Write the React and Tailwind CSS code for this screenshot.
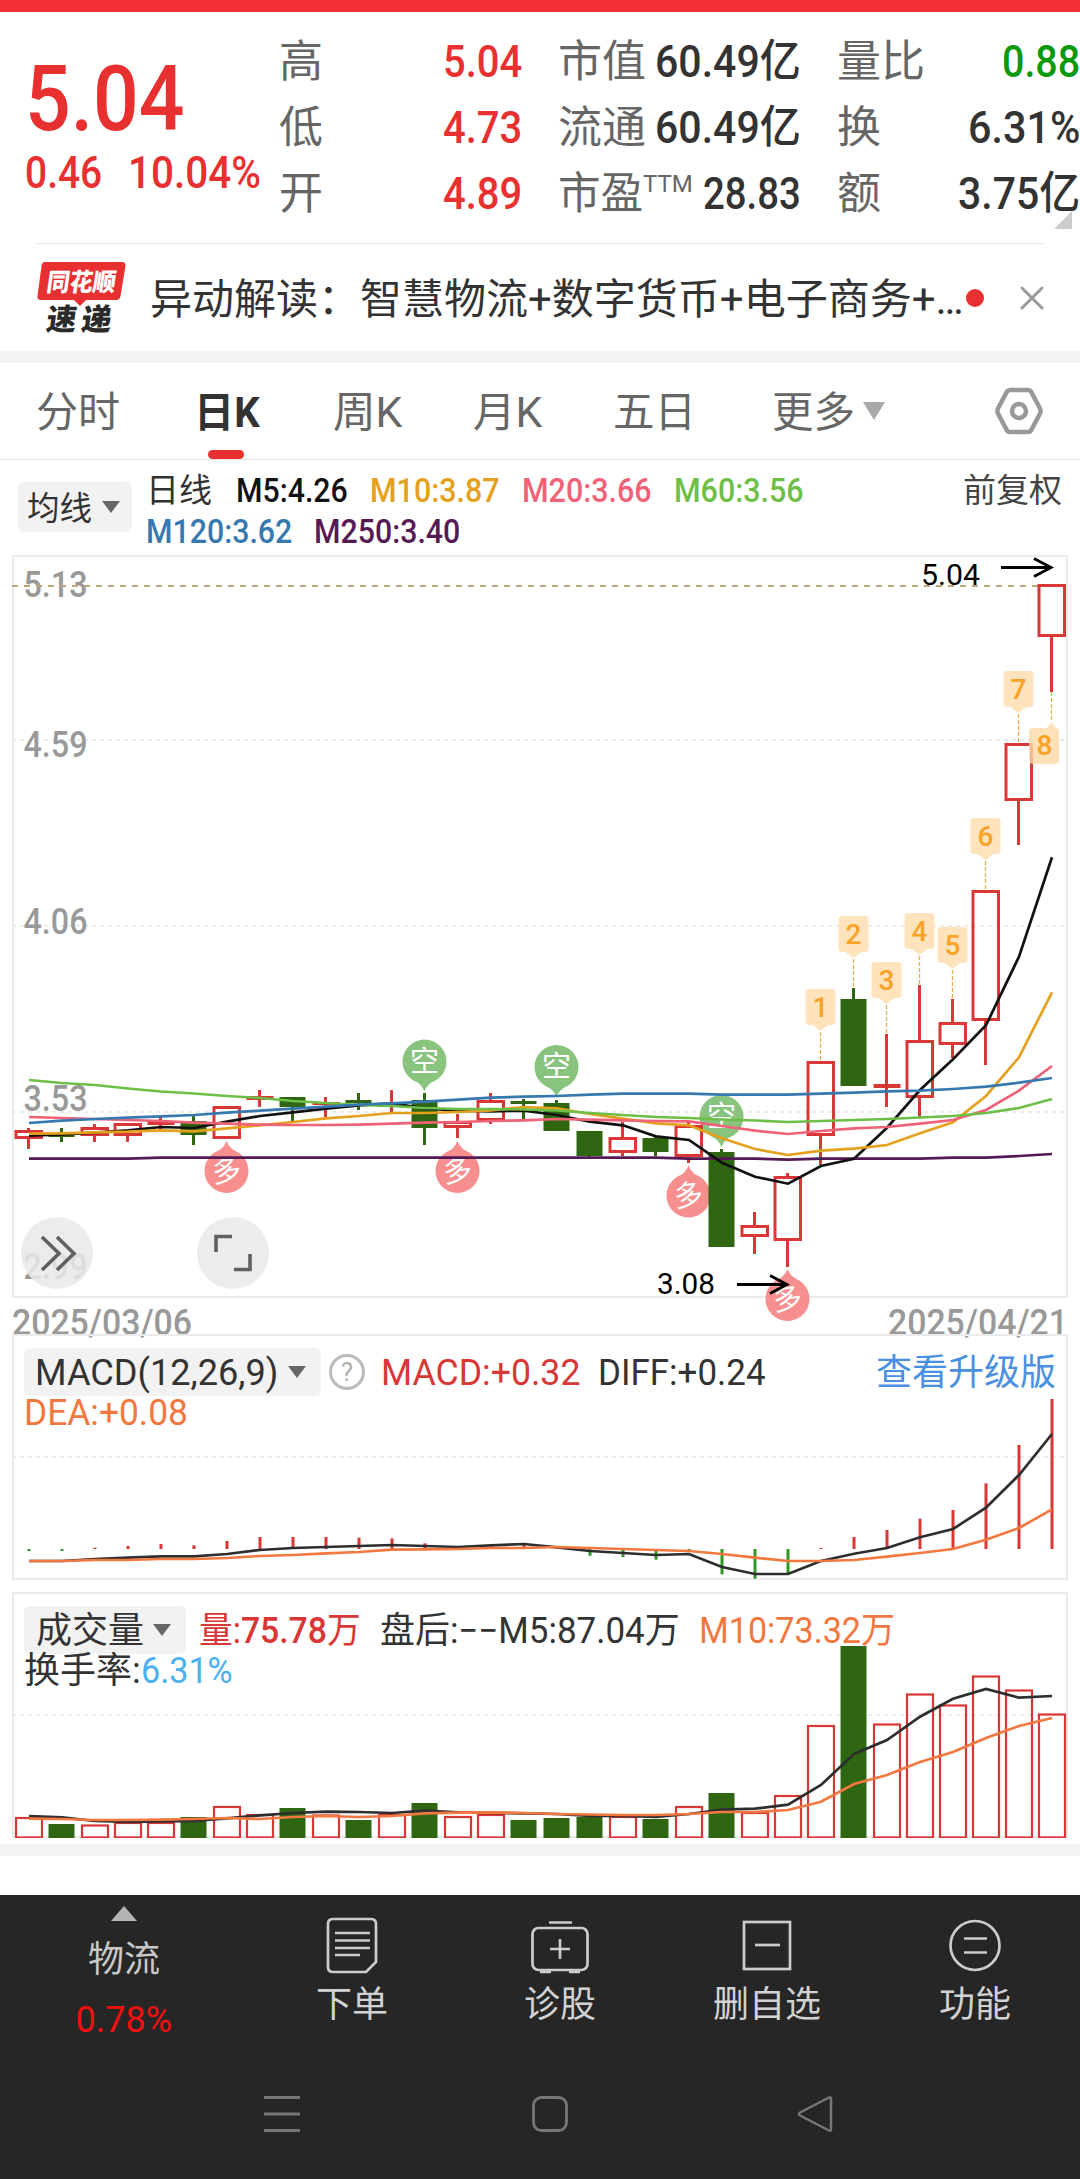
import { useLayoutEffect, useRef } from "react"
import { X } from "lucide-react"

const RED = "#d93636"
const GREEN = "#2f6612"
const px = (i) => 28.5 + i * 33

// [color, body top, body bottom, high, low]
const candles = [
  ["r", 1130, 1139, 1128, 1149], ["g", 1134, 1137, 1128, 1142], ["r", 1127, 1136, 1124, 1142], ["r", 1123, 1136, 1123, 1142],
  ["r", 1121, 1125, 1115, 1129], ["g", 1121, 1135, 1116, 1145], ["r", 1106, 1139, 1106, 1139], ["r", 1096, 1100, 1090, 1107],
  ["g", 1097, 1107, 1097, 1121], ["r", 1102, 1105, 1097, 1117], ["g", 1100, 1103, 1093, 1110], ["r", 1104, 1107, 1090, 1112],
  ["g", 1100, 1128, 1093, 1145], ["r", 1121, 1128, 1114, 1138], ["r", 1100, 1121, 1093, 1124], ["g", 1101, 1104, 1099, 1119],
  ["g", 1103, 1131, 1100, 1131], ["g", 1131, 1156, 1131, 1157], ["r", 1137, 1153, 1122, 1156], ["g", 1138, 1152, 1137, 1156],
  ["r", 1125, 1157, 1120, 1163], ["g", 1152, 1247, 1149, 1247], ["r", 1225, 1237, 1212, 1254], ["r", 1176, 1241, 1173, 1267],
  ["r", 1061, 1136, 1061, 1165], ["g", 999, 1086, 988, 1086], ["r", 1084, 1088, 1034, 1107], ["r", 1040, 1098, 985, 1117],
  ["r", 1022, 1045, 999, 1058], ["r", 890, 1021, 890, 1065], ["r", 743, 801, 743, 845], ["r", 584, 637, 584, 692],
]

const averages = [
  ["#551a55", [1158.7, 1158.7, 1158.7, 1158.7, 1157.7, 1157.7, 1157.7, 1157.7, 1157.7, 1157.7, 1157.7, 1157.7, 1157.7, 1157.7, 1157.7, 1157.7, 1157.7, 1157.7, 1157.7, 1157.7, 1158.7, 1158.7, 1158.7, 1159.7, 1158.7, 1158.7, 1158.7, 1158.7, 1157.7, 1157.7, 1156, 1154]],
  ["#111111", [1135.7, 1134.3, 1132.7, 1130.3, 1127, 1128, 1121.7, 1116, 1112.3, 1108.7, 1105.3, 1103.3, 1108.3, 1110.7, 1111.3, 1110.7, 1115, 1121.7, 1125.3, 1136.3, 1140, 1162.7, 1176.7, 1183.7, 1166, 1158.7, 1127.7, 1090, 1059.3, 1025.3, 956.7, 857.3]],
  ["#e5a01e", [1133.7, 1133.3, 1132.3, 1131.7, 1130.3, 1131.3, 1128.3, 1125.3, 1122, 1118.3, 1116, 1113, 1113, 1112, 1110.3, 1107, 1108.3, 1114, 1118.7, 1123.3, 1125.3, 1138.3, 1149, 1155, 1150.7, 1148.7, 1145, 1133.3, 1122.3, 1096, 1057.3, 992.3]],
  ["#f06277", [1117, 1118, 1119, 1120, 1121, 1122.7, 1123.7, 1124.7, 1125, 1125, 1124.7, 1123.7, 1122.7, 1122, 1121, 1120.3, 1119, 1119.7, 1120.3, 1121, 1121.3, 1126, 1130.7, 1134, 1131, 1128.3, 1127, 1123.7, 1120, 1110, 1090.7, 1066]],
  ["#6dbf47", [1080, 1083, 1085, 1088.5, 1091.5, 1093.5, 1096, 1098, 1101, 1103, 1105, 1106, 1108, 1109, 1109, 1109.5, 1110.5, 1113, 1115, 1117, 1118, 1119.5, 1120.5, 1122, 1121, 1120, 1119, 1117.5, 1116, 1113, 1108, 1099]],
  ["#3579b0", [1123, 1120.7, 1119, 1117.7, 1116.3, 1115, 1112.7, 1110.7, 1108.7, 1106.7, 1104.7, 1103.3, 1101.7, 1099.7, 1097.7, 1096.7, 1096, 1094.7, 1093.7, 1093.7, 1093.7, 1094.7, 1094.7, 1094.7, 1093.7, 1092.7, 1091.3, 1090.7, 1089, 1086.7, 1082.7, 1078]],
]

const macdBars = [1551, 1551, 1547.7, 1546, 1544, 1545.3, 1541, 1537, 1537, 1537, 1537.7, 1538.3, 1543.3, 1547, 1546, 1545, 1548, 1555.7, 1557, 1559.7, 1551.7, 1574.3, 1578.7, 1573, 1548, 1537, 1530, 1518.7, 1510, 1483.3, 1445, 1399]
const diff = [1561, 1561, 1559, 1557.7, 1556.3, 1556.3, 1554, 1550, 1548, 1547, 1546, 1545, 1546, 1547, 1545.3, 1544, 1547.3, 1551, 1553, 1555, 1554, 1567, 1574, 1574, 1561, 1553.7, 1548, 1537.3, 1529, 1507.7, 1475, 1434]
const dea = [1561, 1561, 1560, 1560, 1559, 1559, 1558, 1556, 1555, 1553.3, 1552, 1549.7, 1549.3, 1549, 1548, 1548, 1547, 1548, 1549, 1550, 1551, 1554, 1557.7, 1561, 1561, 1560, 1556.7, 1553, 1549, 1539.7, 1528, 1509.3]

const volumes = [1817, 1824, 1824.5, 1822, 1822, 1817, 1806, 1814, 1808, 1814.5, 1820, 1814, 1803, 1816, 1814, 1820, 1818, 1817, 1816, 1819, 1806, 1793, 1812, 1795, 1725, 1646, 1723.5, 1693.5, 1704.5, 1675.5, 1689.5, 1713.5]
const volM5 = [1816, 1817.3, 1821, 1822, 1821.5, 1821, 1818.3, 1815.3, 1813, 1811.7, 1812, 1813, 1810.7, 1812.3, 1813, 1813.3, 1814, 1816, 1816, 1817, 1814, 1809.7, 1808.7, 1804.7, 1785, 1754, 1740, 1716.7, 1698.7, 1689, 1697.7, 1696]
const volM10 = [1818.7, 1819, 1820, 1820, 1819.7, 1819, 1818, 1819, 1817, 1816, 1817, 1816, 1813.3, 1812.7, 1812.3, 1813, 1814, 1814.5, 1815, 1815, 1814, 1812, 1812, 1810, 1801.7, 1784, 1775, 1762, 1752, 1738, 1726, 1718]

// squeezes a line of text to the width of its box
const Fit = ({ className = "", children }) => {
  const box = useRef(null)
  const inner = useRef(null)
  useLayoutEffect(() => {
    inner.current.style.transform = `scaleX(${box.current.clientWidth / inner.current.offsetWidth})`
  }, [])
  return (
    <span ref={box} className={`block shrink-0 whitespace-nowrap ${className}`}>
      <span ref={inner} className="inline-block origin-left">{children}</span>
    </span>
  )
}

const Line = ({ data, color }) => (
  <polyline points={data.map((y, i) => `${px(i) + 0.5},${y}`).join(" ")} fill="none" stroke={color} strokeWidth="2.7" />
)

const Caret = ({ className = "" }) => (
  <svg viewBox="0 0 18 12" className={`h-3 w-[18px] shrink-0 ${className}`}><path d="M0 0h18l-9 12z" fill="currentColor" /></svg>
)

const Frame = ({ y, h }) => <rect x="13" y={y} width="1054" height={h} fill="none" stroke="#ebebeb" strokeWidth="2" />
const Grid = ({ y }) => <line x1="12" x2="1066" y1={y} y2={y} stroke="#ebebeb" strokeWidth="2" strokeDasharray="4 4" />

const Candle = ({ i }) => {
  const [c, top, bottom, high, low] = candles[i]
  const x = px(i)
  if (c === "g") {
    return (
      <g fill={GREEN}>
        <rect x={x - 13} y={top} width="26" height={bottom - top} />
        <rect x={x - 1.5} y={high} width="3" height={low - high} />
      </g>
    )
  }
  return (
    <g fill={RED}>
      <rect x={x - 1.5} y={high} width="3" height={Math.max(0, top - high)} />
      <rect x={x - 1.5} y={bottom} width="3" height={Math.max(0, low - bottom)} />
      {bottom - top < 6
        ? <rect x={x - 13} y={top} width="27" height={bottom - top} />
        : <rect x={x - 12.5} y={top + 1.5} width="25.5" height={bottom - top - 3} fill="none" stroke={RED} strokeWidth="3" />}
    </g>
  )
}

const Signal = ({ i, cy, up }) => {
  const x = px(i)
  return (
    <g>
      <g fill={up ? "#f78f8e" : "#88c47d"}>
        <circle cx={x} cy={cy} r="22" />
        {up ? <path d={`M${x - 12} ${cy - 18}Q${x - 3} ${cy - 22} ${x} ${cy - 30}Q${x + 3} ${cy - 22} ${x + 12} ${cy - 18}z`} />
          : <path d={`M${x - 12} ${cy + 18}Q${x - 3} ${cy + 22} ${x} ${cy + 30}Q${x + 3} ${cy + 22} ${x + 12} ${cy + 18}z`} />}
      </g>
      <text x={x} y={cy + 10} textAnchor="middle" fontSize="29" fill="#fff" transform={up ? `rotate(-8 ${x} ${cy})` : undefined}>{up ? "多" : "空"}</text>
    </g>
  )
}

const Tag = ({ n }) => {
  const i = 23 + n
  const x = px(i)
  const y = candles[i][3] - 72
  return (
    <g>
      <line x1={x} x2={x} y1={y + 43} y2={y + 72} stroke="#e3b24d" strokeWidth="1.3" strokeDasharray="4 2" />
      <rect x={x - 15} y={y} width="30" height="36" rx="4" fill="#ffe3bc" />
      <path d={`M${x - 8} ${y + 36}h16l-8 6z`} fill="#ffe3bc" />
      <text x={x} y={y + 27.5} textAnchor="middle" fontSize="28" fontWeight="500" fill="#f9a228">{n}</text>
    </g>
  )
}

const Arrow = ({ x, y }) => (
  <path d={`M${x - 51} ${y}H${x - 1}M${x - 18} ${y - 9}L${x - 1} ${y}L${x - 18} ${y + 9}`} fill="none" stroke="#000" strokeWidth="2.8" />
)

const axis = [["5.13", 597], ["4.59", 757], ["4.06", 934], ["3.53", 1111], ["2.99", 1279]]

const KChart = () => (
  <svg viewBox="0 548 1080 787" className="block h-[787px] w-[1080px] overflow-visible">
    <Frame y={556} h={741} />
    <Grid y={740} />
    <Grid y={926} />
    <Grid y={1112} />
    <g fontSize="36" fontWeight="500" fill="#999">
      {axis.map(([t, y]) => <text key={t} x="23.500" y={y} textLength="64" lengthAdjust="spacingAndGlyphs">{t}</text>)}
      <text x="12" y="1335" textLength="180" lengthAdjust="spacingAndGlyphs">2025/03/06</text>
      <text x="888" y="1335" textLength="180" lengthAdjust="spacingAndGlyphs">2025/04/21</text>
    </g>
    <line x1="12" x2="1038" y1="586" y2="586" stroke="#bfa67a" strokeWidth="2" strokeDasharray="6 6" />
    <Signal i={12} cy={1061.5} />
    <Signal i={16} cy={1067} />
    <Signal i={21} cy={1117} />
    <Signal i={6} cy={1171} up />
    <Signal i={13} cy={1171} up />
    <Signal i={20} cy={1195.5} up />
    <Signal i={23} cy={1299} up />
    {candles.map((c, i) => <Candle key={i} i={i} />)}
    {averages.map(([color, data]) => <Line key={color} data={data} color={color} />)}
    {[1, 2, 3, 4, 5, 6, 7].map((n) => <Tag key={n} n={n} />)}
    <line x1="1051.5" x2="1051.5" y1="692" y2="722" stroke="#e3b24d" strokeWidth="1.3" strokeDasharray="4 2" />
    <g fill="#ffd9a6" fillOpacity="0.8">
      <rect x="1029" y="728" width="30" height="36" rx="4" />
      <path d="M1047 728l4.500-6l4.500 6z" />
    </g>
    <text x="1044.500" y="755" textAnchor="middle" fontSize="28" fontWeight="500" fill="#f9a228">8</text>
    <text x="921" y="585" fontSize="30" textLength="59" lengthAdjust="spacingAndGlyphs">5.04</text>
    <Arrow x={1052} y={567.5} />
    <text x="657" y="1294" fontSize="30" textLength="58" lengthAdjust="spacingAndGlyphs">3.08</text>
    <Arrow x={788} y={1284.5} />
    <g fill="#e9e9e9" fillOpacity="0.85">
      <circle cx="57" cy="1253" r="36" />
      <circle cx="233" cy="1253" r="36" />
    </g>
    <g fill="none" stroke="#606060" strokeWidth="3.600">
      <path d="M42 1237l17 16.500l-17 16.500M57 1237l17 16.500l-17 16.500" />
      <path d="M216 1252v-15.500h16M250 1254v15.500h-16" />
    </g>
  </svg>
)

const Panel = ({ top, children, chart }) => (
  <section className="relative h-[246px]">
    <svg viewBox={`0 ${top} 1080 246`} className="absolute inset-0 h-[246px] w-[1080px]">
      <Frame y={top + 1} h={244} />
      <Grid y={top + 123} />
      {chart}
    </svg>
    <div className="relative pl-6 pt-3 text-[36px] leading-[48px]">{children}</div>
  </section>
)

const Row = ({ label, value, w, color = "text-[#333]" }) => (
  <div className="flex h-[66px] items-center justify-between">
    <span className="text-[44px] text-[#666]">{label}</span>
    <Fit className={`text-[45px] font-medium ${color} ${w}`}>{value}</Fit>
  </div>
)

const tabs = [
  ["分时", "w-[84px] ml-9"], ["日K", "w-[66px] ml-[74px] font-bold text-[#333]"], ["周K", "w-[69px] ml-[73px]"],
  ["月K", "w-[69px] ml-[71px]"], ["五日", "w-[83px] ml-[71px]"], ["更多", "w-[83px] ml-[76px]"],
]

const BarItem = ({ name, children, className }) => (
  <div className={`flex flex-col items-center ${className}`}>
    <svg viewBox="0 0 60 60" className="mt-5 h-[60px] w-[60px]" fill="none" stroke="#ccc" strokeWidth="2.700">{children}</svg>
    <span className="mt-1 text-[36px] leading-[52px] text-[#d2d2d2]">{name}</span>
  </div>
)

const App = () => {
  return (
    <div className="h-[2179px] w-[1080px] overflow-hidden bg-white font-['Roboto','Noto_Sans_CJK_SC',sans-serif] text-[#333]">
      <div className="h-3 bg-[#f33038]" />

      <header className="relative flex h-[231px] pt-[17px] leading-[66px]">
        <div className="w-[279px] pl-[25px] font-medium text-[#e93030]">
          <Fit className="mt-[26px] w-[159px] text-[90px] leading-[90px]">5.04</Fit>
          <div className="-mt-px flex text-[45px] leading-[58px]">
            <Fit className="w-[77px]">0.46</Fit>
            <Fit className="ml-[26px] w-[133px]">10.04%</Fit>
          </div>
        </div>
        <div className="w-[243px]">
          <Row label="高" value="5.04" w="w-[79px]" color="text-[#e93030]" />
          <Row label="低" value="4.73" w="w-[79px]" color="text-[#e93030]" />
          <Row label="开" value="4.89" w="w-[79px]" color="text-[#e93030]" />
        </div>
        <div className="ml-9 w-[243px]">
          <Row label="市值" value="60.49亿" w="w-[146px]" />
          <Row label="流通" value="60.49亿" w="w-[146px]" />
          <Row label={<span className="flex"><Fit className="w-[85px]">市盈</Fit><span className="-mt-[10px] text-[24px]">TTM</span></span>} value="28.83" w="w-[98px]" />
        </div>
        <div className="ml-9 w-[243px]">
          <Row label="量比" value="0.88" w="w-[78px]" color="text-[#0a990a]" />
          <Row label="换" value="6.31%" w="w-[112px]" />
          <Row label="额" value="3.75亿" w="w-[122px]" />
        </div>
        <svg viewBox="0 0 18 18" className="absolute left-[1054px] top-[199px] h-[18px] w-[18px]"><path d="M18 0v18H0z" fill="#ccc" /></svg>
      </header>

      <div className="mx-9 flex h-[108px] items-center border-t border-[#e8e8e8]">
        <svg viewBox="0 0 90 74" className="h-[74px] w-[90px] shrink-0 overflow-visible">
          <path d="M9 1h77q4 0 3.500 4l-5 30q-.5 4-5 4H50l-6 6l-6-6H5q-4 0-3.500-4l4-30q.5-4 3.500-4z" fill="#e93030" />
          <g fontWeight="900" transform="skewX(-8)">
            <text x="14" y="30" fontSize="25" fill="#fff" textLength="69" lengthAdjust="spacingAndGlyphs">同花顺</text>
            <text x="19" y="69" fontSize="30" fill="#2a2a2a" textLength="30" lengthAdjust="spacingAndGlyphs">速</text>
            <text x="54" y="69" fontSize="30" fill="#2a2a2a" textLength="30" lengthAdjust="spacingAndGlyphs">递</text>
          </g>
        </svg>
        <Fit className="ml-6 mt-[3px] w-[814px] text-[42px]">异动解读：智慧物流+数字货币+电子商务+…</Fit>
        <span className="ml-[2px] h-[18px] w-[18px] shrink-0 rounded-full bg-[#e93030]" />
        <X className="ml-[28px] h-[40px] w-[40px] shrink-0 text-[#999]" strokeWidth={1.8} />
      </div>
      <div className="h-3 bg-[#f4f4f4]" />

      <nav className="relative flex h-[97px] items-center border-b border-[#e5e5e5] text-[42px] text-[#666]">
        {tabs.map(([name, cls]) => <Fit key={name} className={`mt-[3px] ${cls}`}>{name}</Fit>)}
        <svg viewBox="0 0 22 18" className="ml-[8px] h-[18px] w-[22px]"><path d="M0 0h22l-11 18z" fill="#a9a9a9" /></svg>
        <svg viewBox="0 0 48 48" className="ml-[110px] h-12 w-12" fill="none" stroke="#999" strokeWidth="4.500">
          <path d="M15 3h18q2 0 3 1.500l9 17q1.200 2.500 0 5l-9 17q-1 1.500-3 1.500H15q-2 0-3-1.500l-9-17q-1.200-2.500 0-5l9-17q1-1.500 3-1.500z" />
          <circle cx="24" cy="24" r="7" />
        </svg>
        <span className="absolute left-[208px] top-[87px] h-[9px] w-9 rounded-full bg-[#e93030]" />
      </nav>

      <div className="flex h-[88px] text-[33px] font-medium leading-[41px]">
        <div className="ml-[18px] mt-[22px] flex h-[50px] w-[114px] items-center rounded-md bg-[#f2f2f2] pl-[9px] font-normal">
          <Fit className="mt-[2px] w-[65px]">均线</Fit>
          <Caret className="ml-[10px] text-[#666]" />
        </div>
        <div className="ml-[14px] pt-[10px]">
          <div className="flex">
            <Fit className="w-[66px] font-normal">日线</Fit>
            <Fit className="ml-[24px] w-[112px] text-[#111]">M5:4.26</Fit>
            <Fit className="ml-[22px] w-[130px] text-[#e5a01e]">M10:3.87</Fit>
            <Fit className="ml-[22px] w-[130px] text-[#f06277]">M20:3.66</Fit>
            <Fit className="ml-[22px] w-[130px] text-[#6dbf47]">M60:3.56</Fit>
          </div>
          <div className="flex">
            <Fit className="w-[146px] text-[#3579b0]">M120:3.62</Fit>
            <Fit className="ml-[22px] w-[146px] text-[#551a55]">M250:3.40</Fit>
          </div>
        </div>
        <span className="ml-auto mr-[18px] mt-[10px] font-normal text-[#444]">前复权</span>
      </div>

      <KChart />

      <div className="-mt-px">
        <Panel
          top={1334}
          chart={
            <>
              {macdBars.map((y, i) => <rect key={i} x={px(i) - 1} y={Math.min(y, 1549)} width="3" height={Math.abs(y - 1549)} fill={y > 1549 ? "#2f9a22" : RED} />)}
              <Line data={diff} color="#2e2e2e" />
              <Line data={dea} color="#f27840" />
            </>
          }
        >
          <div className="flex items-center">
            <div className="flex h-12 w-[297px] items-center rounded-md bg-[#f2f2f2] pl-[11px]">
              <Fit className="mt-[3px] w-[243px]">MACD(12,26,9)</Fit>
              <Caret className="ml-[10px] text-[#666]" />
            </div>
            <span className="ml-2 flex h-9 w-9 items-center justify-center rounded-full border-[3px] border-[#bbb] text-[26px] text-[#b0b0b0]">?</span>
            <Fit className="ml-4 mt-[2px] w-[199px] text-[#d93636]">MACD:+0.32</Fit>
            <Fit className="ml-[18px] mt-[2px] w-[168px]">DIFF:+0.24</Fit>
            <span className="ml-auto mr-6 mt-[3px] text-[#4a90e2]">查看升级版</span>
          </div>
          <Fit className="-mt-[8px] w-[164px] text-[#f27840]">DEA:+0.08</Fit>
        </Panel>
      </div>

      <div className="mt-3">
        <Panel
          top={1592}
          chart={
            <>
              {volumes.map((y, i) => candles[i][0] === "g"
                ? <rect key={i} x={px(i) - 13} y={y} width="26" height={1838 - y} fill={GREEN} />
                : <rect key={i} x={px(i) - 12.500} y={y + 1} width="26" height={1836.500 - y} fill="none" stroke={RED} strokeWidth="2.200" />)}
              <Line data={volM5} color="#2e2e2e" />
              <Line data={volM10} color="#f27840" />
            </>
          }
        >
          <div className="flex items-center">
            <div className="flex h-12 w-[162px] items-center rounded-md bg-[#f2f2f2] pl-3">
              <span className="mt-[3px]">成交量</span>
              <Caret className="ml-[9px] text-[#666]" />
            </div>
            <Fit className="ml-[13px] mt-[3px] w-[162px] text-[#d93636]">量:<span className="font-medium">75.78</span>万</Fit>
            <Fit className="ml-[19px] mt-[3px] w-[300px]">盘后:−−M5:87.04万</Fit>
            <Fit className="ml-[19px] mt-[3px] w-[196px] text-[#f27840]">M10:73.32万</Fit>
          </div>
          <div className="-mt-[8px] flex">
            <Fit className="w-[117px]">换手率:</Fit>
            <Fit className="w-[92px] text-[#4ab0ee]">6.31%</Fit>
          </div>
        </Panel>
      </div>

      <div className="mt-[6px] h-3 bg-[#f4f4f4]" />
      <div className="h-[39px]" />

      <footer className="h-[284px] bg-[#262626]">
        <div className="flex h-[150px]">
          <div className="ml-[64px] flex w-[120px] flex-col items-center">
            <svg viewBox="0 0 26 15" className="mt-[11px] h-[15px] w-[26px]"><path d="M13 0l13 15H0z" fill="#b5b5b5" /></svg>
            <span className="mt-[14px] text-[36px] leading-[50px] text-[#c8c8c8]">物流</span>
            <Fit className="mt-[10px] w-[97px] text-[36px] leading-[50px] text-[#f01010]">0.78%</Fit>
          </div>
          <BarItem name="下单" className="ml-[108px] w-[120px]">
            <path d="M11 4h38q5 0 5 5v38l-10 10H11q-5 0-5-5V9q0-5 5-5z" />
            <path d="M13 18h35M13 25.500h35M13 33h35M13 40h25" />
          </BarItem>
          <BarItem name="诊股" className="ml-[88px] w-[120px]">
            <rect x="2.500" y="13" width="55" height="42" rx="6" />
            <path d="M19 7.500h23M30 24v20M20 34h20M10 57h11M39 57h11" />
          </BarItem>
          <BarItem name="删自选" className="ml-[87px] w-[120px]">
            <rect x="7" y="7" width="46" height="47" />
            <path d="M18 30h25" />
          </BarItem>
          <BarItem name="功能" className="ml-[88px] w-[120px]">
            <circle cx="30" cy="30.500" r="24.500" />
            <path d="M19 23.500h23M19 37.500h23" />
          </BarItem>
        </div>
        <div className="flex pl-[262px] pt-[49px]">
          <svg viewBox="0 0 40 40" className="h-10 w-10" stroke="#777" strokeWidth="3"><path d="M2 3.500h36M2 20h36M2 36.500h36" /></svg>
          <svg viewBox="0 0 40 40" className="ml-[228px] h-10 w-10" fill="none" stroke="#777" strokeWidth="2.800"><rect x="3.500" y="3.500" width="33" height="33" rx="8" /></svg>
          <svg viewBox="0 0 40 40" className="ml-[226px] h-10 w-10" fill="none" stroke="#777" strokeWidth="2.500" strokeLinejoin="round"><path d="M33 3.500q2-1 2 1.500v30q0 2.500-2 1.500L4 21.500q-2-1.500 0-3z" /></svg>
        </div>
      </footer>
    </div>
  )
}

export default App
